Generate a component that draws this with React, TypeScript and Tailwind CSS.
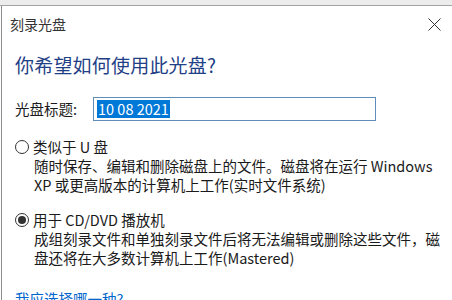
import React, { useState } from 'react'

const font = { fontFamily: '"Noto Sans CJK SC", "Noto Sans", sans-serif' }

function CloseIcon() {
  return (
    <svg width="13" height="13" viewBox="0 0 13 13" className="text-[#333]">
      <path d="M0.5 0.5 L12.5 12.5 M12.5 0.5 L0.5 12.5" stroke="currentColor" strokeWidth="1" fill="none" />
    </svg>
  )
}

function Radio({ checked }: { checked: boolean }) {
  return (
    <span className="w-[14px] h-[14px] rounded-full border border-[#333] bg-white flex items-center justify-center shrink-0">
      {checked && <span className="w-[8px] h-[8px] rounded-full bg-[#333]" />}
    </span>
  )
}

export default function App() {
  const [mode, setMode] = useState<'usb' | 'cd'>('cd')

  return (
    <div className="w-[452px] h-[300px] overflow-hidden bg-white flex flex-col" style={font}>
      {/* 背后窗口的工具栏边缘 */}
      <div className="h-[6px] shrink-0 bg-[#ececec] border-b border-[#a3a3a3]" />

      <div className="flex-1 ml-[1px] border-l border-[#8c8c8c] flex flex-col text-[#1a1a1a]">
        {/* 标题栏 */}
        <div className="h-[36px] shrink-0 flex items-center justify-between pl-[8px] pr-[11px]">
          <span className="text-[14px] text-[#333]">刻录光盘</span>
          <CloseIcon />
        </div>

        <div className="h-[46px] shrink-0 flex items-center pl-[13px]">
          <h1 className="text-[19px] text-[#1f3f86] tracking-[0.2px]">你希望如何使用此光盘?</h1>
        </div>

        <div className="mt-[9px] h-[24px] shrink-0 flex items-center pl-[13px]">
          <span className="w-[78px] text-[14.5px]">光盘标题:</span>
          <div className="w-[283px] h-[24px] border border-[#5f8dba] flex items-center px-[3px]">
            <span className="bg-[#0078d7] text-white text-[14.5px] leading-[18px] px-[1px]">10 08 2021</span>
          </div>
        </div>

        <div
          className="mt-[17px] h-[18px] shrink-0 flex items-center gap-[4px] pl-[13px] cursor-default"
          onClick={() => setMode('usb')}
        >
          <Radio checked={mode === 'usb'} />
          <span className="text-[14.5px] leading-[18px]">类似于 U 盘</span>
        </div>
        <div className="pl-[32px] text-[14.5px] leading-[19px] whitespace-nowrap shrink-0">
          <div>随时保存、编辑和删除磁盘上的文件。磁盘将在运行 Windows</div>
          <div>XP 或更高版本的计算机上工作(实时文件系统)</div>
        </div>

        <div
          className="mt-[17px] h-[18px] shrink-0 flex items-center gap-[4px] pl-[13px] cursor-default"
          onClick={() => setMode('cd')}
        >
          <Radio checked={mode === 'cd'} />
          <span className="text-[14.5px] leading-[18px]">用于 CD/DVD 播放机</span>
        </div>
        <div className="pl-[32px] text-[14.5px] leading-[19px] whitespace-nowrap shrink-0">
          <div>成组刻录文件和单独刻录文件后将无法编辑或删除这些文件，磁</div>
          <div>盘还将在大多数计算机上工作(Mastered)</div>
        </div>

        <div className="mt-[22px] pl-[13px] text-[14.5px] leading-[20px] text-[#0066cc] shrink-0">
          我应选择哪一种?
        </div>
      </div>
    </div>
  )
}
